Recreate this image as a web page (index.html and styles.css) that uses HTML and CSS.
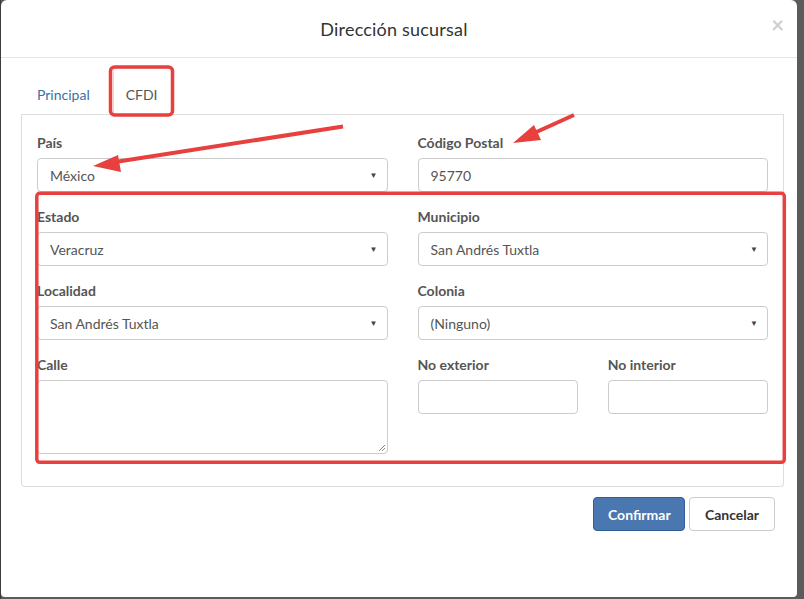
FILE: index.html
```html
<!DOCTYPE html>
<html lang="es">
<head>
<meta charset="utf-8">
<title>Dirección sucursal</title>
<link rel="stylesheet" href="styles.css">
</head>
<body>
<div class="backdrop">
  <div class="modal">
    <div class="modal-header">
      <h4 class="modal-title">Dirección sucursal</h4>
      <span class="close">×</span>
    </div>
    <div class="modal-body">
      <ul class="tabs">
        <li class="tab">Principal</li>
        <li class="tab active">CFDI</li>
      </ul>
      <div class="panel">
        <div class="row">
          <div class="group">
            <label class="lbl">País</label>
            <div class="control select"><span>México</span><span class="caret">▼</span></div>
          </div>
          <div class="group">
            <label class="lbl">Código Postal</label>
            <div class="control"><span>95770</span></div>
          </div>
        </div>
        <div class="row">
          <div class="group">
            <label class="lbl">Estado</label>
            <div class="control select"><span>Veracruz</span><span class="caret">▼</span></div>
          </div>
          <div class="group">
            <label class="lbl">Municipio</label>
            <div class="control select"><span>San Andrés Tuxtla</span><span class="caret">▼</span></div>
          </div>
        </div>
        <div class="row">
          <div class="group">
            <label class="lbl">Localidad</label>
            <div class="control select"><span>San Andrés Tuxtla</span><span class="caret">▼</span></div>
          </div>
          <div class="group">
            <label class="lbl">Colonia</label>
            <div class="control select"><span>(Ninguno)</span><span class="caret">▼</span></div>
          </div>
        </div>
        <div class="row">
          <div class="group">
            <label class="lbl">Calle</label>
            <div class="control textarea">
              <svg class="grip" width="8" height="8" viewBox="0 0 8 8"><path d="M7 1L1 7M7 4L4 7" stroke="#888" stroke-width="1"/></svg>
            </div>
          </div>
          <div class="subrow">
            <div class="group">
              <label class="lbl">No exterior</label>
              <div class="control"></div>
            </div>
            <div class="group">
              <label class="lbl">No interior</label>
              <div class="control"></div>
            </div>
          </div>
        </div>
      </div>
    </div>
    <div class="modal-footer">
      <button class="btn btn-primary">Confirmar</button>
      <button class="btn btn-default">Cancelar</button>
    </div>
  </div>
  <svg class="annot" width="804" height="599" viewBox="0 0 804 599">
    <rect x="110.5" y="67" width="62" height="48" rx="4" fill="none" stroke="#e8403f" stroke-width="3.5"/>
    <rect x="36.8" y="193.3" width="747.5" height="269" rx="3" fill="none" stroke="#e8403f" stroke-width="3.5"/>
    <line x1="343" y1="126.5" x2="112" y2="162.5" stroke="#e8403f" stroke-width="4"/>
    <polygon points="93,166 118,155 121,172" fill="#e8403f"/>
    <line x1="574" y1="115" x2="532" y2="134" stroke="#e8403f" stroke-width="4"/>
    <polygon points="513,143 534,125 541,140" fill="#e8403f"/>
  </svg>
</div>
</body>
</html>
```

FILE: styles.css
```css
* { box-sizing: border-box; }
html, body { margin: 0; padding: 0; }
body {
  width: 804px;
  height: 599px;
  overflow: hidden;
  background: #4f4f4f;
  font-family: Lato, "Open Sans", sans-serif;
  color: #555;
}
.backdrop {
  position: relative;
  width: 804px;
  height: 599px;
  background: linear-gradient(to right, #3c3c3c 0, #3c3c3c 1px, transparent 1px), #5b5b5b;
}
.modal {
  margin-left: 1px;
  width: 796px;
  height: 597px;
  background: #fff;
  border-radius: 6px 6px 4px 4px;
  display: flex;
  flex-direction: column;
}
.modal-header {
  position: relative;
  height: 58px;
  border-bottom: 1px solid #e5e5e5;
  display: flex;
  align-items: center;
  justify-content: center;
  padding-right: 10px;
}
.modal-title {
  margin: 0;
  font-size: 18px;
  font-weight: normal;
  color: #333;
  letter-spacing: 0.2px;
}
.close {
  position: absolute;
  right: 13px;
  top: 14px;
  font-size: 22px;
  font-weight: bold;
  color: #cfcfcf;
  line-height: 22px;
}
.modal-body {
  padding: 10px 13px 0 20px;
}
.tabs {
  list-style: none;
  margin: 0;
  padding: 0;
  display: flex;
  border-bottom: 1px solid #ddd;
  height: 47px;
}
.tab {
  font-size: 14px;
  padding: 18px 20px 0 16px;
  color: #3d6fa6;
  height: 46px;
  margin-right: 3px;
}
.tab.active {
  color: #555;
  border: 1px solid #ddd;
  border-bottom-color: #fff;
  border-radius: 4px 4px 0 0;
  height: 47px;
  padding: 17px 14px 0 12px;
}
.panel {
  border: 1px solid #ddd;
  border-top: none;
  border-radius: 0 0 4px 4px;
  padding: 18px 15px 17px 15px;
}
.row {
  display: grid;
  grid-template-columns: 1fr 1fr;
  column-gap: 30px;
}
.subrow {
  display: grid;
  grid-template-columns: 1fr 1fr;
  column-gap: 30px;
}
.group {
  margin-bottom: 15px;
}
.lbl {
  display: block;
  font-size: 14px;
  font-weight: bold;
  line-height: 20px;
  margin-bottom: 5px;
  color: #555;
}
.control {
  height: 34px;
  border: 1px solid #ccc;
  border-radius: 4px;
  padding: 0 12px;
  font-size: 14px;
  color: #555;
  display: flex;
  align-items: center;
  justify-content: space-between;
  background: #fff;
}
.caret {
  font-size: 8px;
  color: #444;
  margin-right: -3px;
}
.textarea {
  height: 74px;
  position: relative;
}
.grip {
  position: absolute;
  right: 1px;
  bottom: 1px;
}
.modal-footer {
  display: flex;
  justify-content: flex-end;
  gap: 4px;
  padding: 10px 22px 0 0;
}
.btn {
  height: 34px;
  border-radius: 4px;
  font-family: Lato, "Open Sans", sans-serif;
  font-size: 14px;
  font-weight: bold;
  padding: 0 14px;
  cursor: pointer;
}
.btn-primary {
  width: 92px;
  background: #4a77b0;
  border: 1px solid #2e5f98;
  color: #fff;
}
.btn-default {
  width: 86px;
  background: #fff;
  border: 1px solid #ccc;
  color: #333;
}
.annot {
  position: absolute;
  left: 0;
  top: 0;
  pointer-events: none;
}
```
